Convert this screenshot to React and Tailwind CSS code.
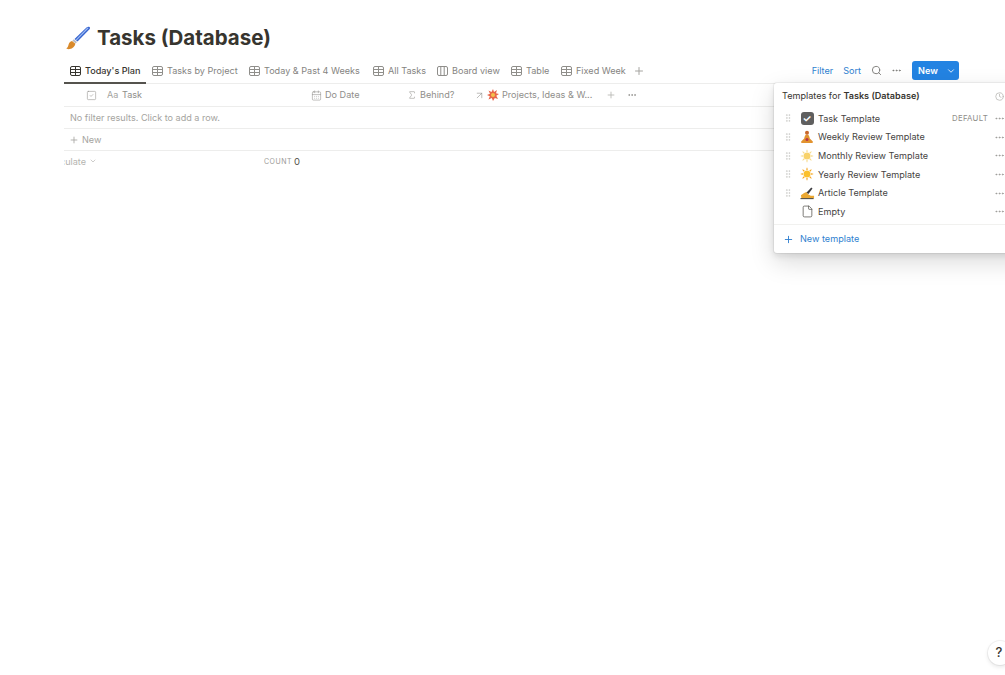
import { Plus, Search, MoreHorizontal, ChevronDown, Sigma, ArrowUpRight, CalendarDays, SquareCheck, GripVertical, File, Clock } from "lucide-react";

function TableIcon({ dark }) {
  return (
    <svg width="11" height="10" viewBox="0 0 11 10" fill="none" stroke={dark ? "#37352f" : "#8f8e8a"} strokeWidth="1" className="shrink-0">
      <rect x="0.5" y="0.5" width="10" height="9" rx="1.5" />
      <path d="M0.5 3.5H10.5M0.5 6.5H10.5M5.5 0.5V9.5" />
    </svg>
  );
}

function BoardIcon() {
  return (
    <svg width="11" height="10" viewBox="0 0 11 10" fill="none" stroke="#8f8e8a" strokeWidth="1" className="shrink-0">
      <rect x="0.5" y="0.5" width="10" height="9" rx="1.5" />
      <path d="M3.8 0.5V9.5M7.2 0.5V9.5" />
    </svg>
  );
}

function Brush() {
  return (
    <svg width="26" height="24" viewBox="0 0 26 24" className="shrink-0">
      <path d="M24.500 1c.8.6.6 1.500 0 2.300L12.500 15.500 9.500 13 21.500 1.500c1-.8 2.200-1.100 3-.5z" fill="#3a66d0" />
      <path d="M22.500 1.500l1 .8L11.500 14.500l-.8-.7z" fill="#9dbcf3" />
      <path d="M8.800 13.300l3.200 2.700-1.300 1.400-3.300-2.700z" fill="#b9bcc4" />
      <path d="M7 14.900l3.400 2.800c-.6 2.600-2.800 5-5.600 5.400-1.400.2-2.600-.1-3.600-.8 1.700-.8 1.900-2.400 2.400-3.900.5-1.700 1.600-3 3.400-3.500z" fill="#d98a2b" />
    </svg>
  );
}

function Lotus() {
  return (
    <svg width="14" height="14" viewBox="0 0 14 14">
      <path d="M7 4.500c2 0 2.300 2 2.800 4l3 3c.4.900-.2 1.500-1 1.500H2.200c-.8 0-1.400-.6-1-1.500l3-3c.5-2 .8-4 2.800-4z" fill="#e2932f" />
      <circle cx="7" cy="2.800" r="2" fill="#c9682b" />
      <circle cx="7" cy="9.500" r="1.500" fill="#b8344a" />
    </svg>
  );
}

function Sun({ size = 14, core = "#f5c542", ray = "#f2b632" }) {
  const angles = [0, 45, 90, 135, 180, 225, 270, 315];
  return (
    <svg width={size} height={size} viewBox="0 0 14 14">
      {angles.map((a) => (
        <path key={a} d="M7 0.300L8 2.800H6z" fill={ray} transform={`rotate(${a} 7 7)`} />
      ))}
      <circle cx="7" cy="7" r="3.500" fill={core} />
    </svg>
  );
}

function Writing() {
  return (
    <svg width="15" height="14" viewBox="0 0 16 14">
      <path d="M1 9.500c2-1.500 4-3 6-3.500l2 2.500 2.500 1.500H15v2.500H1.500z" fill="#eba832" />
      <path d="M7 6.500L12 1l1.300 1.200L9 8z" fill="#3c3c40" />
      <path d="M0.500 13h14" stroke="#37352f" strokeWidth="1" />
    </svg>
  );
}

function Burst() {
  return (
    <svg width="12" height="12" viewBox="0 0 12 12" className="shrink-0">
      <path d="M6 0l1 3 3-2-1 3.200L12 5 9.300 6.800 11 10 7.800 9 6 12 4.800 9 1.500 10.500 2.800 7.200 0 6l3-1.200L1.500 1.500 4.500 3z" fill="#e8664a" />
      <circle cx="6" cy="6" r="2" fill="#f3c14b" />
    </svg>
  );
}

const tabs = [
  { label: "Today's Plan", active: true, w: "w-[82px]" },
  { label: "Tasks by Project", w: "w-[97px]" },
  { label: "Today & Past 4 Weeks", w: "w-[124px]" },
  { label: "All Tasks", w: "w-[64px]" },
  { label: "Board view", board: true, w: "w-[74px]" },
  { label: "Table", w: "w-[50px]" },
  { label: "Fixed Week", w: "w-[72px]" },
];

const templates = [
  { name: "Task Template", icon: <span className="flex h-[13px] w-[13px] items-center justify-center rounded-[3px] bg-[#5f5f5f] text-[10px] font-bold leading-none text-white">✓</span>, isDefault: true },
  { name: "Weekly Review Template", icon: <Lotus /> },
  { name: "Monthly Review Template", icon: <Sun core="#f8d26a" ray="#f7dc8e" /> },
  { name: "Yearly Review Template", icon: <Sun core="#fbc02d" ray="#f6a623" /> },
  { name: "Article Template", icon: <Writing /> },
  { name: "Empty", icon: <File size={13} strokeWidth={1.4} color="#55534e" />, noGrip: true },
];

function Tab({ tab }) {
  return (
    <div className={`flex h-full shrink-0 items-center gap-[4px] pb-[2px] ${tab.w}`}>
      {tab.board ? <BoardIcon /> : <TableIcon dark={tab.active} />}
      <span className={`whitespace-nowrap text-[9.100px] ${tab.active ? "font-medium text-[#37352f]" : "text-[#85847f]"}`}>{tab.label}</span>
    </div>
  );
}

function TemplatesPanel() {
  return (
    <div className="absolute left-[774px] top-[83px] h-[170px] w-[260px] rounded-[3px] bg-white pt-[3px] shadow-[0_0_0_1px_rgba(15,15,15,0.05),0_3px_6px_rgba(15,15,15,0.1),0_9px_24px_rgba(15,15,15,0.15)]">
      <div className="flex h-[20px] items-center justify-between pl-[8px] pr-[30px] text-[9.100px] text-[#37352f]">
        <span>Templates for <span className="font-semibold">Tasks (Database)</span></span>
        <Clock size={9} color="#b5b4b0" />
      </div>
      <div className="mt-[3px]">
        {templates.map((t) => (
          <div key={t.name} className="flex h-[18.700px] items-center pl-[9px] pr-[29px]">
            <span className="flex w-[14px] justify-start">
              {!t.noGrip && <GripVertical size={10} strokeWidth={1.5} color="#c6c5c2" />}
            </span>
            <span className="flex w-[20px] justify-center">{t.icon}</span>
            <span className="ml-[1px] flex-1 text-[9.100px] text-[#46443f]">{t.name}</span>
            {t.isDefault && <span className="mr-[6px] text-[7.800px] tracking-[0.3px] text-[#8f8e8a]">DEFAULT</span>}
            <MoreHorizontal size={11} color="#9b9a97" />
          </div>
        ))}
      </div>
      <div className="mt-[3px] flex h-[27px] items-center gap-[6px] border-t border-[#f1f1ef] pl-[9px] pt-[2px] text-[9.100px] text-[#2f7fd0]">
        <Plus size={11} color="#2f7fd0" />
        New template
      </div>
    </div>
  );
}

export default function App() {
  return (
    <div className="relative h-[675px] w-[1005px] overflow-hidden bg-white pl-[64px] font-['Inter',sans-serif]">
      <div className="flex h-[60px] items-center gap-[6px] pl-[1px] pt-[16px]">
        <Brush />
        <h1 className="text-[20.500px] font-bold leading-none text-[#37352f]">Tasks (Database)</h1>
      </div>

      <div className="flex h-[24px] w-[895px] items-stretch border-b border-[#ededec] pl-[6px]">
        <div className="relative flex items-stretch">
          {tabs.map((tab) => (
            <Tab key={tab.label} tab={tab} />
          ))}
          <div className="absolute -bottom-[1px] -left-[6px] h-[2px] w-[82px] bg-[#55534e]" />
        </div>
        <div className="flex items-center pb-[2px]"><Plus size={12} color="#a5a4a0" /></div>
        <div className="ml-auto flex items-center pb-[2px] text-[9.100px] text-[#2f7fd0]">
          <span>Filter</span>
          <span className="ml-[10px]">Sort</span>
          <Search size={11} color="#7b7a76" className="ml-[10px]" />
          <MoreHorizontal size={11} color="#7b7a76" className="ml-[9px]" />
          <div className="ml-[10px] flex h-[19px] w-[47px] items-center rounded-[3px] bg-[#2383e2] text-white">
            <span className="w-[32px] text-center font-semibold">New</span>
            <ChevronDown size={10} className="ml-[2px]" />
          </div>
        </div>
      </div>

      <div className="flex h-[23px] w-[895px] items-center border-b border-[#ededec] text-[9.100px] text-[#8f8e8a]">
        <SquareCheck size={11} strokeWidth={1.2} className="ml-[22px] shrink-0" />
        <span className="ml-[10px] w-[11px] text-[#a5a4a0]">Aa</span>
        <span className="ml-[4px] w-[189px]">Task</span>
        <CalendarDays size={11} strokeWidth={1.2} className="shrink-0" />
        <span className="ml-[3px] w-[82px]">Do Date</span>
        <Sigma size={10} strokeWidth={1.3} className="shrink-0" />
        <span className="ml-[3px] w-[54px] whitespace-nowrap">Behind?</span>
        <ArrowUpRight size={11} strokeWidth={1.3} className="shrink-0" />
        <span className="ml-[2px]"><Burst /></span>
        <span className="ml-[3px] w-[92px] whitespace-nowrap">Projects, Ideas &amp; W...</span>
        <Plus size={10} color="#b5b4b0" className="ml-[12px]" />
        <MoreHorizontal size={10} className="ml-[11px]" />
      </div>

      <div className="flex h-[22px] w-[895px] items-center border-b border-[#ededec] pl-[6px] text-[9.100px] text-[#a5a4a0]">
        No filter results. Click to add a row.
      </div>

      <div className="flex h-[22px] w-[895px] items-center border-b border-[#ededec] pl-[5px] pt-[1px] text-[9.100px] text-[#a5a4a0]">
        <Plus size={10} />
        <span className="ml-[3px]">New</span>
      </div>

      <div className="flex h-[21px] items-center text-[9.100px] text-[#b5b4b0]">
        <span className="w-[200px] overflow-hidden whitespace-nowrap">
          <span className="-ml-[18px] inline-flex items-center gap-[3px]">Calculate <ChevronDown size={8} /></span>
        </span>
        <span className="pt-[1px] text-[7px] tracking-[0.5px] text-[#9b9a97]">COUNT</span>
        <span className="ml-[2px] pt-[2px] text-[9.500px] text-[#55534e]">0</span>
      </div>

      <TemplatesPanel />

      <div className="absolute left-[988px] top-[641px] flex h-[24px] w-[24px] items-center justify-center rounded-full bg-white pr-[2px] text-[13px] font-medium text-[#37352f] shadow-[0_0_0_1px_rgba(15,15,15,0.05),0_2px_4px_rgba(15,15,15,0.1)]">?</div>
    </div>
  );
}
